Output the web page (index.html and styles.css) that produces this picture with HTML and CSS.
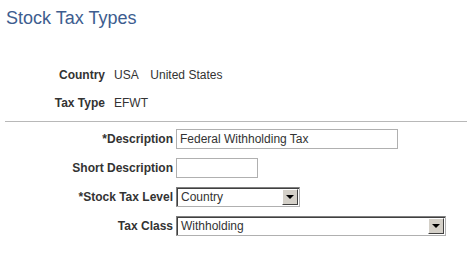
FILE: index.html
```html
<!DOCTYPE html>
<html lang="en">
<head>
  <meta charset="UTF-8">
  <meta name="viewport" content="width=device-width, initial-scale=1.0">
  <title>Stock Tax Types</title>
  <link rel="stylesheet" href="styles.css">
</head>
<body>
  <h1 class="page-title">Stock Tax Types</h1>

  <!-- Chaves da página -->
  <div class="summary">
    <span class="field-label">Country</span>
    <span class="field-value">USA <span class="descr">United States</span></span>
    <span class="field-label">Tax Type</span>
    <span class="field-value">EFWT</span>
  </div>

  <hr class="divider">

  <form class="detail">
    <label class="field-label" for="descr">*Description</label>
    <input type="text" id="descr" class="edit edit-long" value="Federal Withholding Tax">

    <label class="field-label" for="descrShort">Short Description</label>
    <input type="text" id="descrShort" class="edit edit-short" value="">

    <label class="field-label">*Stock Tax Level</label>
    <div class="dropdown dropdown-small">
      <span class="dropdown-text">Country</span>
      <span class="dropdown-btn"></span>
    </div>

    <label class="field-label">Tax Class</label>
    <div class="dropdown dropdown-wide">
      <span class="dropdown-text">Withholding</span>
      <span class="dropdown-btn"></span>
    </div>
  </form>
</body>
</html>
```

FILE: styles.css
```css
body {
  margin: 0;
  font-family: Arial, "Liberation Sans", sans-serif;
  font-size: 12px;
  color: #333;
  background-color: #fff;
}
.page-title {
  margin: 8px 0 0 6px;
  font-size: 18px;
  font-weight: normal;
  line-height: 21px;
  color: #3d5d8f;
}
.summary {
  display: grid;
  grid-template-columns: 105px auto;
  column-gap: 9px;
  row-gap: 12px;
  margin-top: 38px;
  line-height: 16px;
}
.field-label {
  font-weight: bold;
  text-align: right;
  color: #333;
}
.field-value .descr {
  margin-left: 9px;
}
.divider {
  border: none;
  border-top: 1px solid #b8b8b8;
  margin: 10px 0 0 5px;
}
.detail {
  display: grid;
  grid-template-columns: 173px auto;
  column-gap: 3px;
  row-gap: 9px;
  align-items: center;
  justify-items: start;
  margin-top: 7px;
}
.detail .field-label {
  justify-self: end;
}
.edit {
  box-sizing: border-box;
  height: 20px;
  margin: 0;
  padding: 0 3px;
  border: 1px solid #b0b0b0;
  font-family: inherit;
  font-size: 12px;
  color: #333;
}
.edit-long {
  width: 222px;
}
.edit-short {
  width: 82px;
}
.dropdown {
  box-sizing: border-box;
  display: flex;
  align-items: center;
  height: 20px;
  border: 1px solid #808080;
  border-right-color: #b0b0b0;
  border-bottom-color: #b0b0b0;
  box-shadow: inset 1px 1px 0 #404040;
  background-color: #fff;
  padding: 1px 1px 1px 3px;
}
.dropdown-small {
  width: 124px;
}
.dropdown-wide {
  width: 270px;
}
.dropdown-text {
  flex: 1;
  padding-left: 1px;
}
.dropdown-btn {
  box-sizing: border-box;
  width: 16px;
  height: 16px;
  background-color: #d4d0c8;
  border: 1px solid;
  border-color: #fff #404040 #404040 #fff;
  position: relative;
}
.dropdown-btn::after {
  content: "";
  position: absolute;
  left: 3px;
  top: 5px;
  border-left: 4px solid transparent;
  border-right: 4px solid transparent;
  border-top: 4px solid #000;
}
```
